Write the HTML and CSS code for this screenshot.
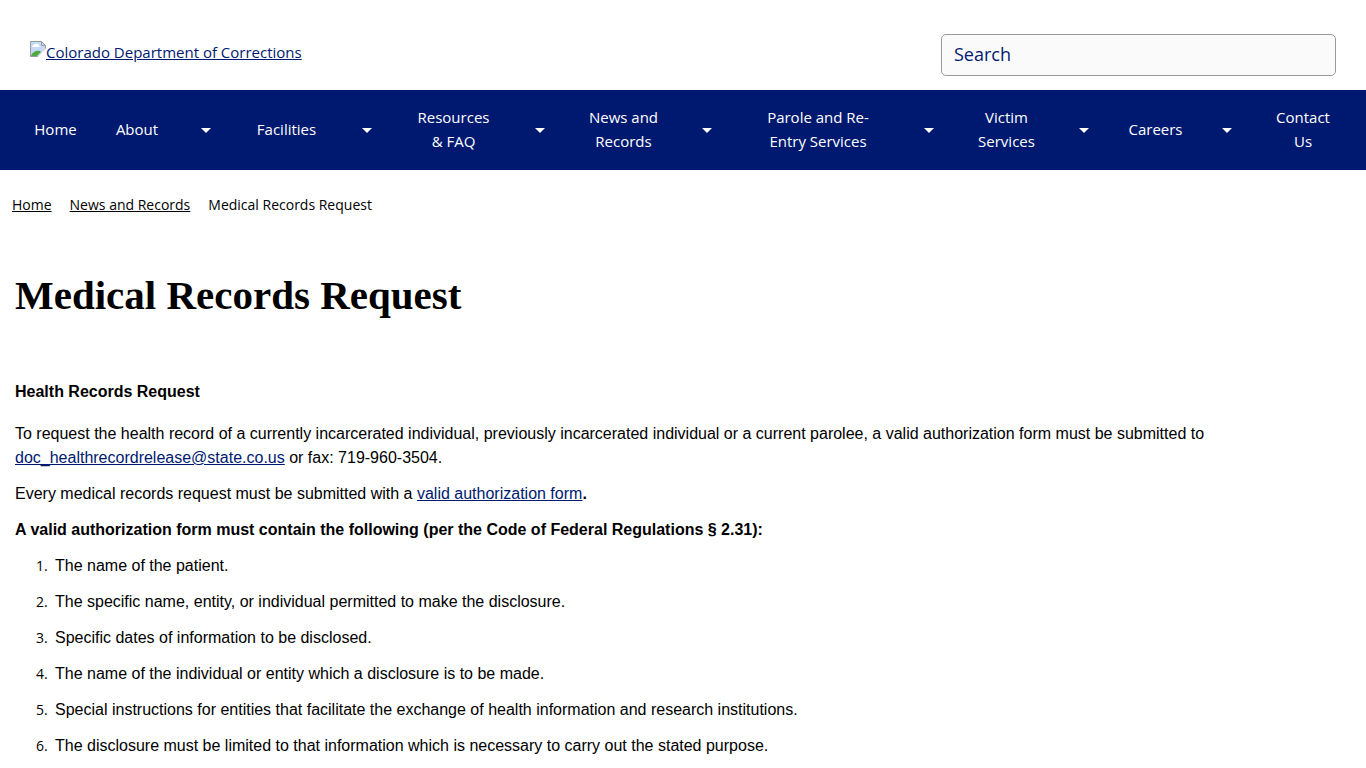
FILE: index.html
```html
<!DOCTYPE html>
<html lang="en">
<head>
<meta charset="utf-8">
<title>Medical Records Request | Colorado Department of Corrections</title>
<link rel="stylesheet" href="styles.css">
</head>
<body>
<header class="site-header">
  <a class="brand" href="#">
    <svg class="brand-icon" width="16" height="16" viewBox="0 0 16 16" aria-hidden="true">
      <path d="M.5.5h11l4 4v3L8 15.500H.5z" fill="#c6d9f7"/>
      <path d="M2 6q0-2 2-2 1-2 3-1 2 0 2 2 1 0 1 1z" fill="#fff"/>
      <path d="M1 15c1-4 5-6 9-5l1 1-4 4z" fill="#4faa46"/>
      <path d="M15.500 7.500v-3l-4-4H.5v15H8M11.500.5v4h4" fill="none" stroke="#9a9a9a"/>
      <path d="M8 15.500l7.500-7.500" stroke="#ddd"/>
    </svg><span class="brand-text">Colorado Department of Corrections</span>
  </a>
  <form class="search" role="search">
    <input class="search-input" type="search" placeholder="Search" aria-label="Search">
  </form>
</header>

<nav class="main-nav" aria-label="Main">
  <ul class="menu">
    <li class="menu-item"><a class="menu-link" href="#">Home</a></li>
    <li class="menu-item"><a class="menu-link" href="#">About</a><button class="toggle" type="button" aria-label="Expand About"></button></li>
    <li class="menu-item"><a class="menu-link" href="#">Facilities</a><button class="toggle" type="button" aria-label="Expand Facilities"></button></li>
    <li class="menu-item"><a class="menu-link" href="#">Resources &amp;&nbsp;FAQ</a><button class="toggle" type="button" aria-label="Expand Resources"></button></li>
    <li class="menu-item"><a class="menu-link" href="#">News and Records</a><button class="toggle" type="button" aria-label="Expand News and Records"></button></li>
    <li class="menu-item"><a class="menu-link" href="#">Parole and Re-Entry Services</a><button class="toggle" type="button" aria-label="Expand Parole and Re-Entry Services"></button></li>
    <li class="menu-item"><a class="menu-link" href="#">Victim Services</a><button class="toggle" type="button" aria-label="Expand Victim Services"></button></li>
    <li class="menu-item"><a class="menu-link" href="#">Careers</a><button class="toggle" type="button" aria-label="Expand Careers"></button></li>
    <li class="menu-item"><a class="menu-link" href="#">Contact Us</a></li>
  </ul>
</nav>

<nav class="breadcrumb" aria-label="Breadcrumb">
  <a href="#">Home</a>
  <a href="#">News and Records</a>
  <span aria-current="page">Medical Records Request</span>
</nav>

<main class="content">
  <h1 class="page-title">Medical Records Request</h1>
  <h2 class="section-title">Health Records Request</h2>
  <p>To request the health record of a currently incarcerated individual, previously incarcerated individual or a current parolee, a valid authorization form must be submitted to <a href="#">doc_healthrecordrelease@state.co.us</a> or fax: 719-960-3504.</p>
  <p>Every medical records request must be submitted with a <a href="#">valid authorization form</a><strong>.</strong></p>
  <p><strong>A valid authorization form must contain the following (per the Code of Federal Regulations § 2.31):</strong></p>
  <ol class="requirements">
    <li>The name of the patient.</li>
    <li>The specific name, entity, or individual permitted to make the disclosure.</li>
    <li>Specific dates of information to be disclosed.</li>
    <li>The name of the individual or entity which a disclosure is to be made.</li>
    <li>Special instructions for entities that facilitate the exchange of health information and research institutions.</li>
    <li>The disclosure must be limited to that information which is necessary to carry out the stated purpose.</li>
  </ol>
</main>
</body>
</html>
```
FILE: styles.css
```css
* { box-sizing: border-box; }

body {
  margin: 0;
  background: #fff;
  color: #000;
  font: 15px/24px "Trebuchet MS", "Open Sans", sans-serif;
}

.site-header {
  display: flex;
  justify-content: space-between;
  align-items: flex-start;
  padding: 34px 30px 14px;
}

.brand {
  display: flex;
  padding-top: 7px;
  color: #001970;
  text-decoration: none;
}

.brand-text {
  line-height: 22px;
  text-decoration: underline;
}

.search { width: 395px; }

.search-input {
  display: block;
  width: 100%;
  height: 42px;
  padding: 0 12px 2px;
  border: 1px solid #999;
  border-radius: 5px;
  background: #fafafa;
  color: #001970;
  font: inherit;
  font-size: 18px;
  font-weight: 500;
  appearance: none;
}

.search-input::placeholder { color: #001970; opacity: 1; }

.main-nav { padding: 0 15px; background: #001970; }

.menu {
  display: grid;
  grid-template-columns: 81fr 138fr 161fr 173fr 167fr 222fr 155fr 143fr 96fr;
  margin: 0;
  padding: 0;
  list-style: none;
}

.menu-item {
  display: flex;
  align-items: center;
  min-width: 0;
  min-height: 80px;
}

.menu-link {
  flex: 1;
  min-width: 0;
  padding: 0 14px 2px;
  color: #fff;
  font-weight: 500;
  text-align: center;
  text-decoration: none;
}

.toggle {
  display: flex;
  justify-content: center;
  width: 56px;
  padding: 16px 0;
  border: 0;
  background: none;
}

.toggle::before {
  content: "";
  border: 5px solid transparent;
  border-top-color: #fff;
  border-bottom: 0;
}

.breadcrumb {
  display: flex;
  gap: 18px;
  padding: 23px 12px 0;
  font-size: 14px;
}

.breadcrumb a { color: #000; }

.content {
  padding: 0 15px;
  font-family: "Liberation Sans", Arial, sans-serif;
  font-size: 16px;
}

.content a { color: #001970; }

.content p { max-width: 1200px; margin: 0 0 12px; }

.page-title {
  margin: 53px 0 60px;
  font: bold 41px/50px "Liberation Serif", "Times New Roman", serif;
}

.section-title {
  margin: 0 0 18px;
  font-size: 16px;
  line-height: 24px;
}

.requirements { margin: 0; padding-left: 40px; }

.requirements li { margin-bottom: 12px; }

.requirements li::marker {
  content: counter(list-item) ".\00a0\00a0";
  font-family: "Trebuchet MS", "Open Sans", sans-serif;
  font-size: 14px;
  font-weight: 500;
}
```
